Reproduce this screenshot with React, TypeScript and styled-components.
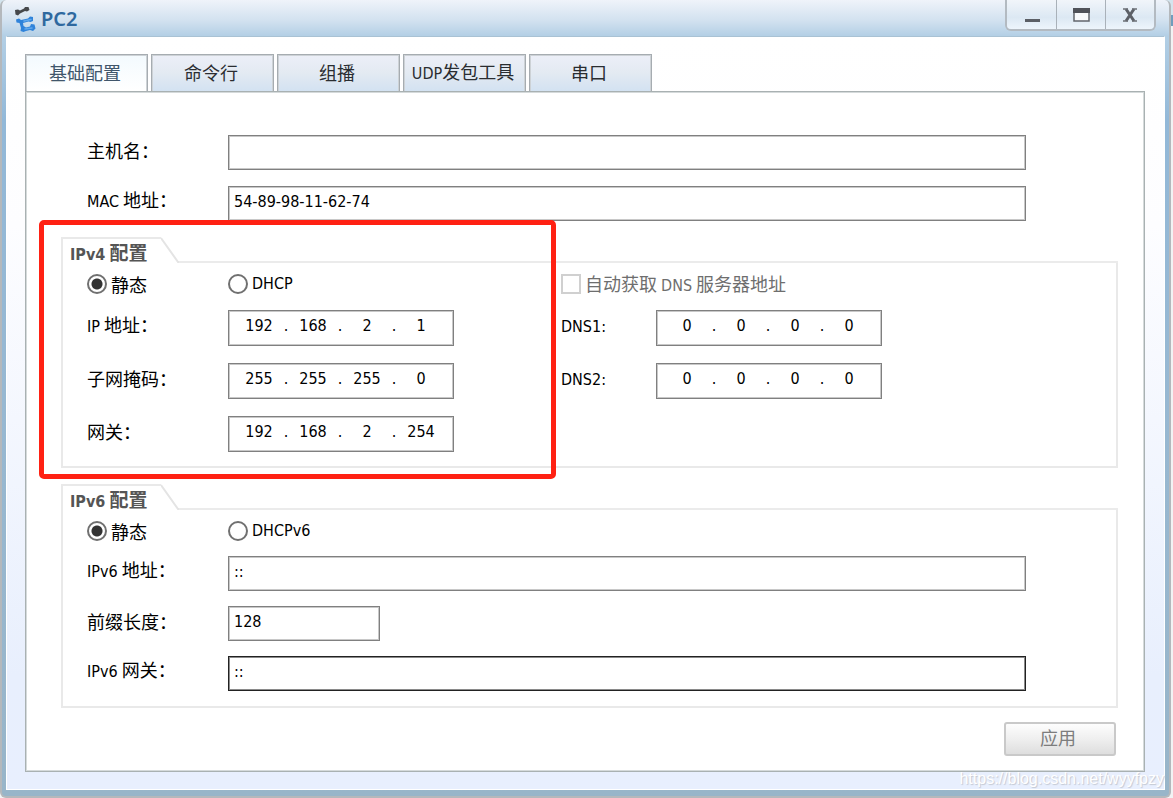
import React from "react";
import styled, { createGlobalStyle } from "styled-components";

const latinFont = `"DejaVu Sans Condensed", "Noto Sans", "Noto Sans CJK SC", sans-serif`;
const cjkFont = `"Noto Sans CJK SC", "Noto Sans", sans-serif`;

const GlobalStyle = createGlobalStyle`
  *, *::before, *::after { box-sizing: border-box; }
  body {
    margin: 0;
    background: linear-gradient(#d3e4ee 0 15px, #6f9dbd 15px 26px, #f2f3f4 26px);
    font-family: ${cjkFont};
    font-size: 18px;
    line-height: 24px;
    color: #000;
  }
  button, input { font: inherit; color: inherit; margin: 0; }
`;

const Window = styled.main`
  position: relative;
  margin-right: 2px;
  padding: 0 4px 6px;
  border: 2px solid #b4b8bc;
  border-top: 0;
  border-radius: 6px;
  background: linear-gradient(#eff3fa 0, #d3e2f0 20px, #b3cfe5 36px, #92b8d8 120px, #97b8d2 50%, #98b5c9 100%);
`;

const TitleBar = styled.header`
  display: flex;
  align-items: center;
  height: 36px;
  padding-left: 7px;
`;

const Title = styled.h1`
  flex: 1;
  margin: 0 0 0 5px;
  padding-top: 2px;
  font: 600 20px/24px "Noto Sans", sans-serif;
  color: #2f699f;
`;

const WindowControls = styled.div`
  display: flex;
  align-self: flex-start;
  height: 31px;
  margin-right: 9px;
  border: 2px solid #b3bac1;
  border-top: 0;
  border-radius: 0 0 6px 6px;
  overflow: hidden;
`;

const ControlButton = styled.button`
  display: grid;
  place-items: center;
  width: 49px;
  padding: 0;
  border: 0;
  background: linear-gradient(#f1f5fa, #dce8f3 60%, #edf5fc);

  & + & { border-left: 1px solid #a9b1b9; }
`;

const Client = styled.div`
  padding: 17px 19px 17px 18px;
  border: 1px solid #fff;
  border-top-color: #a9c2d4;
  background: linear-gradient(#fff 0, #fdfdff 25%, #e8effd 85%, #e8effe 100%);
`;

const TabList = styled.div`
  display: flex;
  gap: 3px;
`;

const Tab = styled.button<{ $active?: boolean }>`
  width: 123px;
  height: 37px;
  padding: 0 4px 2px 1px;
  border: 1px solid #a6acb1;
  border-bottom: 0;
  box-shadow: inset 1px 1px #cdd2d6, inset -1px 0 #cdd2d6;
  color: ${(p) => (p.$active ? "#40566b" : "#2a2d31")};
  background: ${(p) =>
    p.$active
      ? "linear-gradient(#f3fafe, #fff)"
      : "linear-gradient(#eceff8, #e3eaf2 50%, #d3e2f2)"};
`;

const Panel = styled.section`
  display: flex;
  flex-direction: column;
  gap: 16px;
  padding: 43px 26px 15px 35px;
  border: 1px solid #a9b1b2;
  box-shadow: inset 0 0 0 1px #d5dadb;
  background: #fff;
`;

const Latin = styled.span`
  font-family: ${latinFont};
  font-size: 16px;
`;

const HostFields = styled.div`
  display: flex;
  flex-direction: column;
  gap: 16px;
  padding: 0 92px 0 26px;
`;

const Row = styled.div`
  display: flex;
  align-items: center;
`;

const Label = styled.label<{ $narrow?: boolean }>`
  flex: none;
  width: ${(p) => (p.$narrow ? 95 : 141)}px;
  padding-bottom: 6px;
  white-space: nowrap;
`;

const TextInput = styled.input<{ $short?: boolean; $focused?: boolean }>`
  flex: ${(p) => (p.$short ? "0 0 152px" : "1")};
  min-width: 0;
  height: 35px;
  padding: 0 5px 4px;
  border: 1px solid ${(p) => (p.$focused ? "#222" : "#808080")};
  border-radius: 0;
  box-shadow: inset 0 0 0 1px ${(p) => (p.$focused ? "#8a8a8a" : "#c8c8c8")};
  outline: 0;
  background: #fff;
  font-family: ${latinFont};
  font-size: 16px;
`;

const Group = styled.section`
  position: relative;
`;

const GroupHeader = styled.div`
  display: flex;
  height: 26px;
`;

const GroupTitle = styled.h2`
  width: 100px;
  margin: 0;
  padding: 0 0 0 7px;
  border: solid #e9e9e9;
  border-width: 2px 0 0 2px;
  font-size: 19px;
  line-height: 26px;
  font-weight: 700;
  color: #555;
  white-space: nowrap;
`;

const Slope = styled.svg`
  flex: none;
`;

const HeaderLine = styled.div`
  flex: 1;
  border-bottom: 2px solid #ebebeb;
`;

const GroupBody = styled.div<{ $bottom: number }>`
  display: flex;
  padding: 11px 90px ${(p) => p.$bottom}px 24px;
  border: solid #e9e9e9;
  border-width: 0 2px 2px;
`;

const Column = styled.div<{ $gap: number; $width?: number }>`
  display: flex;
  flex-direction: column;
  flex: ${(p) => (p.$width ? `0 0 ${p.$width}px` : "1")};
  min-width: 0;
  gap: ${(p) => p.$gap}px;
`;

const ChoiceRow = styled.div`
  display: flex;
  height: 20px;
`;

const Choice = styled.label<{ $wide?: boolean; $muted?: boolean }>`
  display: flex;
  align-items: center;
  gap: 4px;
  width: ${(p) => (p.$wide ? "141px" : "auto")};
  color: ${(p) => (p.$muted ? "#6e6e6e" : "#000")};
  white-space: nowrap;
`;

const Radio = styled.input`
  appearance: none;
  flex: none;
  width: 20px;
  height: 20px;
  border: 2px solid #707070;
  border-radius: 50%;
  background: #fff;

  &:checked { background: radial-gradient(circle, #333 0 5px, #fff 6px); }
`;

const CheckBox = styled.input`
  appearance: none;
  flex: none;
  width: 20px;
  height: 20px;
  border: 2px solid #d0d0d0;
  background: #fff;
`;

const AddressBox = styled.div`
  display: flex;
  flex: none;
  width: 226px;
  height: 36px;
  padding: 1px 1px 5px 13px;
  border: 1px solid #808080;
  box-shadow: inset 0 0 0 1px #c8c8c8;
  background: #fff;
  font-family: ${latinFont};
  font-size: 16px;
  line-height: 28px;
`;

const Octet = styled.input`
  width: 34px;
  padding: 0;
  border: 0;
  outline: 0;
  background: none;
  text-align: center;
`;

const Dot = styled.span`
  width: 20px;
  text-align: center;
`;

const Highlight = styled.div`
  position: absolute;
  top: -17px;
  left: -22px;
  width: 517px;
  height: 259px;
  border: 5px solid #ff2113;
  border-radius: 5px;
  pointer-events: none;
`;

const Actions = styled.div`
  display: flex;
  justify-content: flex-end;
  margin-top: -2px;
  padding-right: 2px;
`;

const ApplyButton = styled.button`
  width: 112px;
  height: 34px;
  padding: 0 4px 4px 0;
  border: 2px solid #c9c9c9;
  border-radius: 3px;
  background: linear-gradient(#fdfdfd, #efefef 50%, #dedede);
  color: #7d7d7d;
`;

const Watermark = styled.span`
  position: absolute;
  right: 5px;
  bottom: 7px;
  font: 16px/20px "Liberation Sans", sans-serif;
  color: #fff;
  text-shadow: 1px 1px 1px #c3c8d2;
`;

function Logo() {
  return (
    <svg width="23" height="28" viewBox="0 0 23 28" fill="none" strokeLinecap="round" strokeLinejoin="round" aria-hidden="true">
      <path d="M2 6 L5 5.500 L7 6.500 L11 4.500 L12 3 L15.500 3 L16.500 6 L14 7.500 L12 7 L7 9.500 L5 11.500 L2.500 10.500 Z" fill="#46484b" />
      <path d="M3 15.500 L6 14.500 L8 16 L15 14.500 L17 12.500 L20 13 L20 17 L17.500 18 L15.500 17.500 L10 19 L10.500 22 L13 23.500 L17 22.500 L18 20 L21.500 20.500 L22.500 24.500 L20 27 L17 26 L13 27 L10.500 28 L7.500 27 L8 24 L6.500 19 L3.500 18.500 Z" fill="#2f83da" />
      <path d="M11 17 L18 15.500 M12 25 L19 24" stroke="#62a9ec" strokeWidth="1.500" />
    </svg>
  );
}

function AddressField({ id, name, value }: { id: string; name: string; value: string }) {
  return (
    <AddressBox>
      {value.split(".").map((part, i) => (
        <React.Fragment key={i}>
          {i > 0 && <Dot>.</Dot>}
          <Octet id={i === 0 ? id : undefined} aria-label={`${name} ${i + 1}`} defaultValue={part} maxLength={3} />
        </React.Fragment>
      ))}
    </AddressBox>
  );
}

function GroupHeading({ version }: { version: string }) {
  return (
    <GroupHeader>
      <GroupTitle>
        <Latin>{version}</Latin> 配置
      </GroupTitle>
      <Slope width="18" height="26" viewBox="0 0 18 26" aria-hidden="true">
        <path d="M0 1 L17 25 L18 25" fill="none" stroke="#e4e4e4" strokeWidth="2" />
      </Slope>
      <HeaderLine />
    </GroupHeader>
  );
}

export default function App() {
  return (
    <>
      <GlobalStyle />
      <Window>
        <TitleBar>
          <Logo />
          <Title>PC2</Title>
          <WindowControls>
            <ControlButton aria-label="最小化">
              <svg width="16" height="18"><path d="M1 14.500 H16" stroke="#5b5f66" strokeWidth="3" /></svg>
            </ControlButton>
            <ControlButton aria-label="最大化">
              <svg width="17" height="14">
                <path d="M1 1 H16 V13 H1 Z" fill="#f8fafc" stroke="#62666d" strokeWidth="1.500" />
                <path d="M0 2.500 H17" stroke="#4f5259" strokeWidth="5" />
              </svg>
            </ControlButton>
            <ControlButton aria-label="关闭">
              <svg width="14" height="14"><path d="M3 1 L11 13 M11 1 L3 13" stroke="#5b5f66" strokeWidth="3" /><path d="M0 1 H5 M9 1 H14 M0 13 H5 M9 13 H14" stroke="#6b6f76" strokeWidth="1.500" /></svg>
            </ControlButton>
          </WindowControls>
        </TitleBar>

        <Client>
          <TabList role="tablist">
            <Tab role="tab" aria-selected="true" $active>基础配置</Tab>
            <Tab role="tab" aria-selected="false">命令行</Tab>
            <Tab role="tab" aria-selected="false">组播</Tab>
            <Tab role="tab" aria-selected="false"><Latin>UDP</Latin>发包工具</Tab>
            <Tab role="tab" aria-selected="false">串口</Tab>
          </TabList>

          <Panel>
            <HostFields>
              <Row>
                <Label htmlFor="host">主机名：</Label>
                <TextInput id="host" />
              </Row>
              <Row>
                <Label htmlFor="mac"><Latin>MAC</Latin> 地址：</Label>
                <TextInput id="mac" defaultValue="54-89-98-11-62-74" />
              </Row>
            </HostFields>

            <Group>
              <GroupHeading version="IPv4" />
              <GroupBody $bottom={14}>
                <Column $gap={16} $width={474}>
                  <ChoiceRow>
                    <Choice $wide><Radio type="radio" name="ipv4" defaultChecked />静态</Choice>
                    <Choice><Radio type="radio" name="ipv4" /><Latin>DHCP</Latin></Choice>
                  </ChoiceRow>
                  <Column $gap={17}>
                    <Row>
                      <Label htmlFor="ip"><Latin>IP</Latin> 地址：</Label>
                      <AddressField id="ip" name="IP 地址" value="192.168.2.1" />
                    </Row>
                    <Row>
                      <Label htmlFor="mask">子网掩码：</Label>
                      <AddressField id="mask" name="子网掩码" value="255.255.255.0" />
                    </Row>
                    <Row>
                      <Label htmlFor="gateway">网关：</Label>
                      <AddressField id="gateway" name="网关" value="192.168.2.254" />
                    </Row>
                  </Column>
                </Column>
                <Column $gap={16}>
                  <ChoiceRow>
                    <Choice $muted>
                      <CheckBox type="checkbox" disabled />
                      <span>自动获取 <Latin>DNS</Latin> 服务器地址</span>
                    </Choice>
                  </ChoiceRow>
                  <Column $gap={17}>
                    <Row>
                      <Label htmlFor="dns1" $narrow><Latin>DNS1:</Latin></Label>
                      <AddressField id="dns1" name="DNS1" value="0.0.0.0" />
                    </Row>
                    <Row>
                      <Label htmlFor="dns2" $narrow><Latin>DNS2:</Latin></Label>
                      <AddressField id="dns2" name="DNS2" value="0.0.0.0" />
                    </Row>
                  </Column>
                </Column>
              </GroupBody>
              <Highlight />
            </Group>

            <Group>
              <GroupHeading version="IPv6" />
              <GroupBody $bottom={15}>
                <Column $gap={15}>
                  <ChoiceRow>
                    <Choice $wide><Radio type="radio" name="ipv6" defaultChecked />静态</Choice>
                    <Choice><Radio type="radio" name="ipv6" /><Latin>DHCPv6</Latin></Choice>
                  </ChoiceRow>
                  <Row>
                    <Label htmlFor="ip6"><Latin>IPv6</Latin> 地址：</Label>
                    <TextInput id="ip6" defaultValue="::" />
                  </Row>
                  <Row>
                    <Label htmlFor="prefix">前缀长度：</Label>
                    <TextInput id="prefix" defaultValue="128" $short />
                  </Row>
                  <Row>
                    <Label htmlFor="gateway6"><Latin>IPv6</Latin> 网关：</Label>
                    <TextInput id="gateway6" defaultValue="::" $focused />
                  </Row>
                </Column>
              </GroupBody>
            </Group>

            <Actions>
              <ApplyButton>应用</ApplyButton>
            </Actions>
          </Panel>
        </Client>
        <Watermark>https://blog.csdn.net/wyyfpzy</Watermark>
      </Window>
    </>
  );
}
